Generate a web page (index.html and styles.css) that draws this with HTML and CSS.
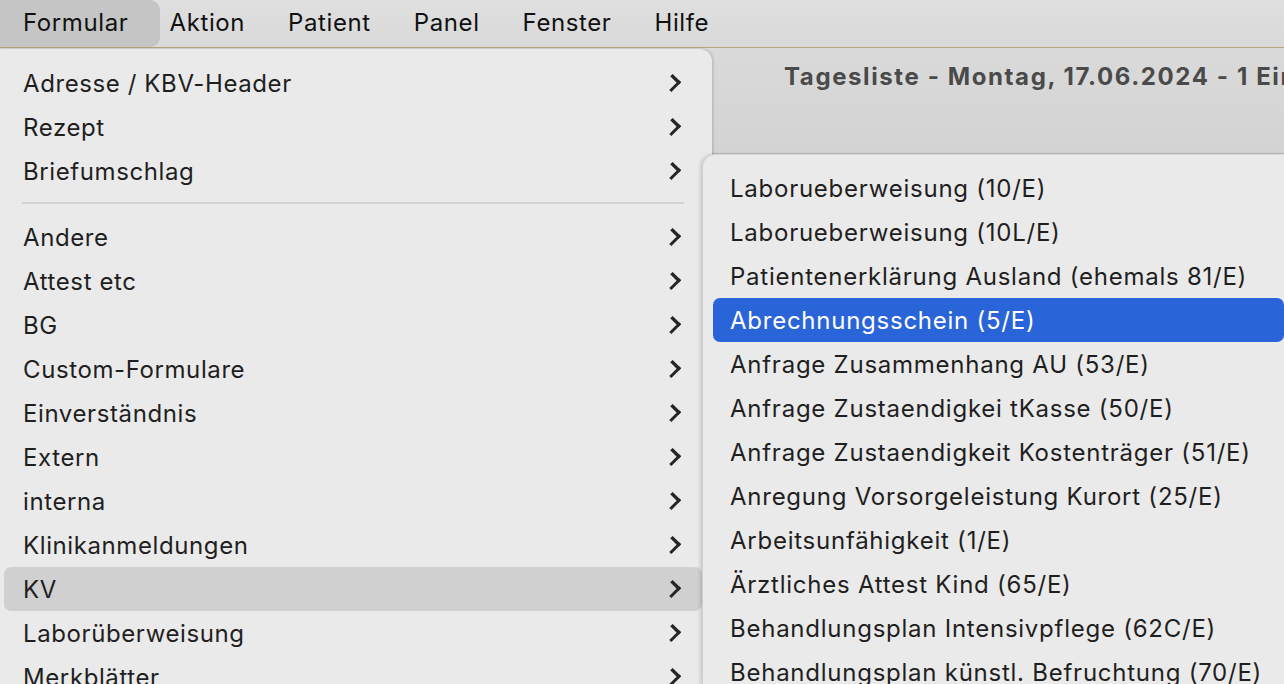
FILE: index.html
```html
<!DOCTYPE html>
<html lang="de">
<head>
    <meta charset="UTF-8">
    <meta name="viewport" content="width=device-width, initial-scale=1.0">
    <title>Formular - Tagesliste</title>
    <link rel="stylesheet" href="styles.css">
</head>
<body>
    <div class="menubar">
        <div class="bar-item active">Formular</div>
        <div class="bar-item">Aktion</div>
        <div class="bar-item">Patient</div>
        <div class="bar-item">Panel</div>
        <div class="bar-item">Fenster</div>
        <div class="bar-item">Hilfe</div>
    </div>

    <div class="window">
        <div class="toolbar">
            <h1 class="title">Tagesliste - Montag, 17.06.2024 - 1 Eintrag</h1>
        </div>
        <div class="content"></div>
    </div>

    <!-- Hauptmenue "Formular" -->
    <div class="menu main">
        <div class="item">Adresse / KBV-Header<span class="chev"></span></div>
        <div class="item">Rezept<span class="chev"></span></div>
        <div class="item">Briefumschlag<span class="chev"></span></div>
        <div class="sep"></div>
        <div class="item">Andere<span class="chev"></span></div>
        <div class="item">Attest etc<span class="chev"></span></div>
        <div class="item">BG<span class="chev"></span></div>
        <div class="item">Custom-Formulare<span class="chev"></span></div>
        <div class="item">Einverständnis<span class="chev"></span></div>
        <div class="item">Extern<span class="chev"></span></div>
        <div class="item">interna<span class="chev"></span></div>
        <div class="item">Klinikanmeldungen<span class="chev"></span></div>
        <div class="item open">KV<span class="chev"></span></div>
        <div class="item">Laborüberweisung<span class="chev"></span></div>
        <div class="item">Merkblätter<span class="chev"></span></div>
    </div>

    <!-- Untermenue "KV" -->
    <div class="menu sub">
        <div class="item">Laborueberweisung (10/E)</div>
        <div class="item">Laborueberweisung (10L/E)</div>
        <div class="item">Patientenerklärung Ausland (ehemals 81/E)</div>
        <div class="item selected">Abrechnungsschein (5/E)</div>
        <div class="item">Anfrage Zusammenhang AU (53/E)</div>
        <div class="item">Anfrage Zustaendigkei tKasse (50/E)</div>
        <div class="item">Anfrage Zustaendigkeit Kostenträger (51/E)</div>
        <div class="item">Anregung Vorsorgeleistung Kurort (25/E)</div>
        <div class="item">Arbeitsunfähigkeit (1/E)</div>
        <div class="item">Ärztliches Attest Kind (65/E)</div>
        <div class="item">Behandlungsplan Intensivpflege (62C/E)</div>
        <div class="item">Behandlungsplan künstl. Befruchtung (70/E)</div>
    </div>
</body>
</html>
```

FILE: styles.css
```css
* {
    margin: 0;
    padding: 0;
    box-sizing: border-box;
}

body {
    font-family: Inter, "Liberation Sans", sans-serif;
    font-size: 24px;
    letter-spacing: 0.6px;
    color: #1f1f1f;
    background: #e9e9e9;
    width: 1284px;
    height: 684px;
    overflow: hidden;
    position: relative;
}

.menubar {
    display: flex;
    height: 48px;
    background: linear-gradient(#dfdfdf, #d9d9d9);
    border-bottom: 1px solid #b9a57f;
}

.bar-item {
    padding: 0 21.5px;
    line-height: 46px;
    color: #111;
}

.active {
    background: #c5c5c5;
    border-radius: 0 10px 10px 0;
    height: 47px;
    width: 160px;
    padding-left: 23px;
    margin-right: -12px;
}

.window {
    height: 635px;
    display: flex;
    flex-direction: column;
}

.toolbar {
    height: 106px;
    background: linear-gradient(#dadada, #d3d3d3);
    border-bottom: 1px solid #bdbdbd;
    padding: 14px 0 0 784px;
    overflow: hidden;
}

.title {
    font-size: 24px;
    font-weight: 700;
    letter-spacing: 1.6px;
    color: #4a4a4a;
    white-space: nowrap;
}

.content {
    flex: 1;
    background: #ebebeb;
}

/* Menues */
.menu {
    position: absolute;
    background: #eaeaea;
    display: flex;
    flex-direction: column;
    overflow: hidden;
}

.main {
    left: 0;
    top: 49px;
    width: 712px;
    bottom: 0;
    border-radius: 0 12px 0 0;
    padding: 12px 10px 0 4px;
    box-shadow: 1px 0 3px rgba(0, 0, 0, 0.18);
}

.sub {
    left: 702px;
    right: 0;
    top: 155px;
    bottom: 0;
    border-radius: 12px 0 0 0;
    padding: 11px 0 0 10px;
    box-shadow: -1px 0 4px rgba(0, 0, 0, 0.2);
    border-left: 1px solid #cfcfcf;
    letter-spacing: 0.75px;
}

.item {
    flex: none;
    height: 44px;
    display: flex;
    align-items: center;
    justify-content: space-between;
    padding: 0 20px 0 19px;
    border-radius: 7px;
    white-space: nowrap;
}

.sub .item {
    padding-left: 17px;
}

.open {
    background: #d0d0d0;
}

.selected {
    background: #2a64d9;
    color: #fff;
}

.sep {
    flex: none;
    height: 2px;
    background: #d3d3d3;
    margin: 9px 18px 11px 18px;
}

.chev {
    width: 12px;
    height: 12px;
    border-right: 3px solid #262626;
    border-top: 3px solid #262626;
    transform: rotate(45deg) scaleY(1.15);
    margin-right: 4px;
}
```
